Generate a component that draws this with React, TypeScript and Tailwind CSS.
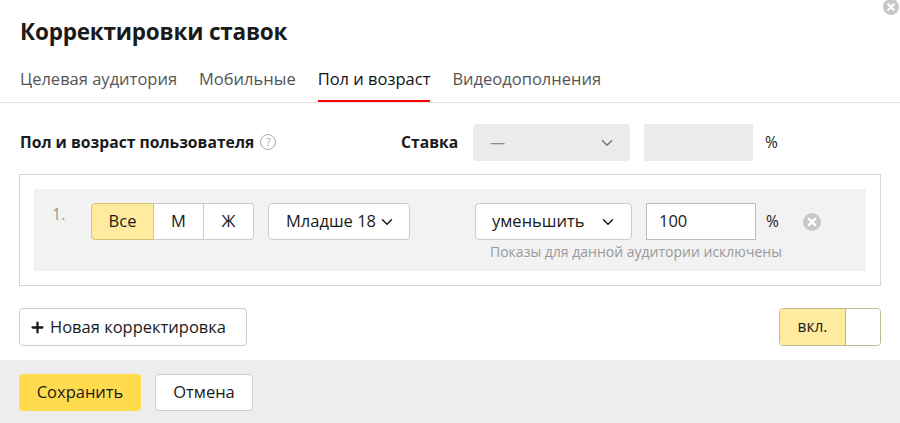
import { ChevronDown, Plus } from 'lucide-react';

const tabs = ['Целевая аудитория', 'Мобильные', 'Пол и возраст', 'Видеодополнения'];

function CloseCircle({ className }: { className: string }) {
  return (
    <svg viewBox="0 0 16 16" className={className}>
      <circle cx="8" cy="8" r="8" fill="#c8c8c8" />
      <path d="M5.2 5.2l5.6 5.6M10.8 5.2l-5.6 5.6" stroke="#fff" strokeWidth="2.2" strokeLinecap="round" />
    </svg>
  );
}

export default function App() {
  return (
    <div className="relative w-[900px] h-[423px] overflow-hidden bg-white text-[#1a1a1a] font-['Open_Sans',sans-serif] flex flex-col">
      <CloseCircle className="absolute right-[1px] top-[-1px] w-[16px] h-[16px]" />

      <h1 className="px-[20px] pt-[14px] text-[22.5px] font-bold leading-[36px] tracking-[-0.2px]">Корректировки ставок</h1>

      <div className="flex gap-[22px] px-[20px] mt-[18px] border-b border-[#e3e3e3] h-[35px]">
        {tabs.map((t, i) => (
          <div
            key={t}
            className={`text-[16.5px] leading-[20px] pt-[1px] border-b-[2px] ${
              i === 2 ? 'border-[#ff0000] text-[#111]' : 'border-transparent text-[#555]'
            }`}
          >
            {t}
          </div>
        ))}
      </div>

      <div className="flex items-center px-[20px] mt-[21px] h-[37px]">
        <div className="flex items-center w-[381px] text-[15.7px] font-bold">
          Пол и возраст пользователя
          <span className="ml-[6px] w-[16px] h-[16px] rounded-full border border-[#aaa] text-[#aaa] text-[11px] font-normal flex items-center justify-center">?</span>
        </div>
        <div className="text-[15.7px] font-bold w-[72px]">Ставка</div>
        <div className="w-[157px] h-[37px] rounded-[4px] bg-[#ebebeb] flex items-center justify-between pl-[17px] pr-[14px] text-[#888]">
          <span className="text-[15px]">—</span>
          <ChevronDown className="w-[18px] h-[18px] text-[#777]" strokeWidth={2} />
        </div>
        <div className="ml-[14px] w-[109px] h-[37px] bg-[#ebebeb]" />
        <span className="ml-[12px] text-[15.5px]">%</span>
      </div>

      <div className="mx-[19px] mt-[13px] h-[112px] border border-[#d6d6d6] p-[14px]">
        <div className="h-[82px] bg-[#f2f2f2] flex pt-[14px]">
          <span className="w-[57px] pl-[18px] text-[16px] text-[#999] leading-[22px]">1.</span>
          <div className="flex h-[37px] text-[16.5px]">
            <div className="w-[63px] flex items-center justify-center bg-[#ffeba0] border border-[#d9c27a] rounded-l-[4px]">Все</div>
            <div className="w-[50px] flex items-center justify-center bg-white border-y border-r border-[#ccc]">М</div>
            <div className="w-[50px] flex items-center justify-center bg-white border-y border-r border-[#ccc] rounded-r-[4px]">Ж</div>
          </div>
          <div className="ml-[14px] w-[142px] h-[37px] bg-white border border-[#ccc] rounded-[4px] flex items-center pl-[17px] gap-[2px] text-[16.5px]">
            Младше 18
            <ChevronDown className="w-[18px] h-[18px]" strokeWidth={2} />
          </div>
          <div className="ml-[65px] flex flex-col">
            <div className="flex items-center">
              <div className="w-[157px] h-[37px] bg-white border border-[#ccc] rounded-[4px] flex items-center justify-between pl-[16px] pr-[14px] text-[16.5px]">
                уменьшить
                <ChevronDown className="w-[18px] h-[18px]" strokeWidth={2} />
              </div>
              <div className="ml-[14px] w-[110px] h-[37px] bg-white border border-[#bbb] flex items-center pl-[12px] text-[16.5px]">100</div>
              <span className="ml-[10px] text-[15.5px]">%</span>
              <CloseCircle className="ml-[24px] w-[18px] h-[18px]" />
            </div>
            <div className="mt-[3px] ml-[15px] text-[14px] text-[#999] leading-[18px]">Показы для данной аудитории исключены</div>
          </div>
        </div>
      </div>

      <div className="flex items-center justify-between px-[19px] mt-[22px] h-[38px]">
        <button className="h-[38px] w-[228px] border border-[#ccc] rounded-[4px] flex items-center pl-[9px] gap-[4px] text-[16.5px]">
          <Plus className="w-[17px] h-[17px]" strokeWidth={3.2} />
          Новая корректировка
        </button>
        <div className="flex h-[38px] w-[102px] border border-[#c2b98a] rounded-[4px] overflow-hidden">
          <div className="w-[65px] bg-[#ffeba0] flex items-center justify-center text-[15.5px] font-medium">вкл.</div>
          <div className="flex-1 bg-white border-l border-[#c2b98a]" />
        </div>
      </div>

      <div className="mt-[14px] flex-1 bg-[#ededed] flex items-start gap-[14px] px-[19px] pt-[14px]">
        <button className="h-[37px] w-[122px] rounded-[4px] bg-[#ffdb4d] text-[16.5px]">Сохранить</button>
        <button className="h-[37px] w-[98px] rounded-[4px] bg-white border border-[#ccc] text-[16.5px]">Отмена</button>
      </div>
    </div>
  );
}
